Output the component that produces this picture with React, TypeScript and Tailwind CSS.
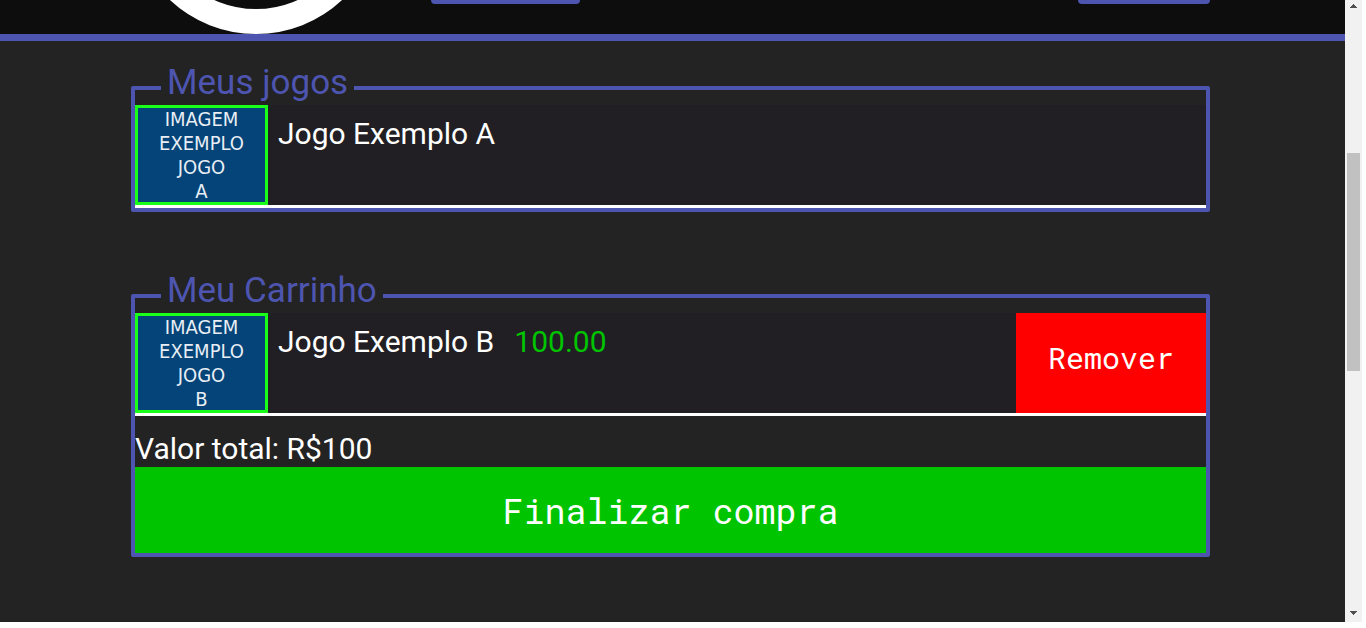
import type { ReactNode } from "react";

type Game = { name: string; cover: string; price?: string };

const owned: Game[] = [{ name: "Jogo Exemplo A", cover: "A" }];
const cart: Game[] = [{ name: "Jogo Exemplo B", cover: "B", price: "100.00" }];

function Cover({ letter }: { letter: string }) {
  return (
    <div className="flex w-[133px] shrink-0 flex-col items-center justify-center border-3 border-[#19ff19] bg-[#044478] font-['DejaVu_Sans_Condensed','DejaVu_Sans',sans-serif] text-[20px] leading-6 text-[#e8eef4]">
      <span>IMAGEM</span>
      <span>EXEMPLO</span>
      <span>JOGO</span>
      <span>{letter}</span>
    </div>
  );
}

function GameRow({ game }: { game: Game }) {
  return (
    <li className="flex h-[103px] border-b-3 border-white bg-[#211f24]">
      <Cover letter={game.cover} />
      <div className="flex flex-1 gap-5 pt-3 pl-2.5 text-[30px] leading-[34px]">
        <span>{game.name}</span>
        {game.price && <span className="text-[#00c400]">{game.price}</span>}
      </div>
      {game.price && (
        <button
          type="button"
          className="w-[190px] bg-[#ff0000] pb-3 font-['Roboto_Mono','DejaVu_Sans_Mono',monospace] text-[30px]"
        >
          Remover
        </button>
      )}
    </li>
  );
}

function Panel({ title, children }: { title: string; children: ReactNode }) {
  return (
    <fieldset className="rounded-xs border-4 border-[#4d55b0]">
      <legend className="ml-[26px] px-1.5 pb-2.5 text-[35px] leading-6 text-[#4d55b0]">
        {title}
      </legend>
      {children}
    </fieldset>
  );
}

function ScrollBar() {
  return (
    <div aria-hidden="true" className="flex w-[17px] shrink-0 flex-col items-center bg-[#f1f1f1]">
      <svg className="h-[17px] w-[17px]" viewBox="0 0 17 17" fill="#505050" shapeRendering="crispEdges">
        <path d="M8 4h1v1h1v1h1v1h1v1H5V7h1V6h1V5h1z" />
      </svg>
      <div className="flex w-[13px] flex-1 flex-col">
        <div className="grow-[136]" />
        <div className="grow-[218] bg-[#c1c1c1]" />
        <div className="grow-[234]" />
      </div>
      <svg className="h-[17px] w-[17px]" viewBox="0 0 17 17" fill="#505050" shapeRendering="crispEdges">
        <path d="M5 6h7v1h-1v1h-1v1H9v1H8V9H7V8H6V7H5z" />
      </svg>
    </div>
  );
}

export default function App() {
  return (
    <div className="flex h-screen bg-white pr-1 pb-1.5 font-[Roboto,sans-serif] text-white">
      <div className="min-w-0 flex-1 overflow-hidden bg-[#232323]">
        <header className="flex h-[41px] items-start border-b-7 border-[#4d55b0] bg-[#0d0d0d] pr-[135px] pl-[130px]">
          <svg className="h-[34px] w-[252px]" viewBox="0 0 252 34" aria-hidden="true">
            <circle cx="126" cy="-92" r="113.5" fill="none" stroke="#fff" strokeWidth="25" />
          </svg>
          <div className="ml-[49px] h-1 w-[149px] rounded-b-md bg-[#4d55b0]" />
          <div className="ml-auto h-1 w-[132px] rounded-b-md bg-[#4d55b0]" />
        </header>
        <main className="flex flex-col gap-[67px] pt-[30px] pr-[135px] pl-[131px]">
          <Panel title="Meus jogos">
            <ul>
              {owned.map((game) => (
                <GameRow key={game.name} game={game} />
              ))}
            </ul>
          </Panel>
          <Panel title="Meu Carrinho">
            <ul>
              {cart.map((game) => (
                <GameRow key={game.name} game={game} />
              ))}
            </ul>
            <p className="pt-4 pb-px text-[30px] leading-[34px]">Valor total: R$100</p>
            <button
              type="button"
              className="h-[86px] w-full bg-[#00c400] font-['Roboto_Mono','DejaVu_Sans_Mono',monospace] text-[35px]"
            >
              Finalizar compra
            </button>
          </Panel>
        </main>
      </div>
      <ScrollBar />
    </div>
  );
}
